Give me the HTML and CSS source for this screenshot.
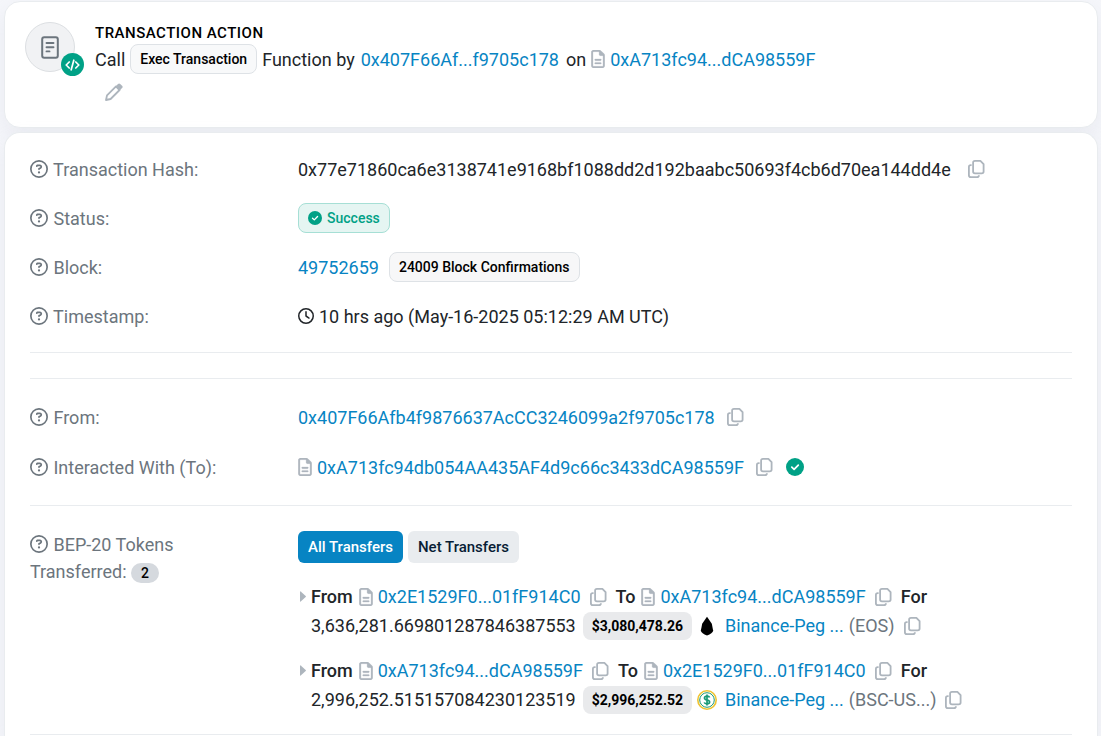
FILE: index.html
```html
<!DOCTYPE html>
<html lang="en">
<head>
<meta charset="utf-8">
<meta name="viewport" content="width=device-width, initial-scale=1">
<title>Transaction Details</title>
<link rel="stylesheet" href="styles.css">
</head>
<body>
<svg class="sprite" aria-hidden="true">
  <symbol id="help" viewBox="0 0 512 512"><path d="M464 256A208 208 0 1 0 48 256a208 208 0 1 0 416 0zM0 256a256 256 0 1 1 512 0A256 256 0 1 1 0 256zm169.800-90.700c7.900-22.300 29.100-37.300 52.800-37.300h58.300c34.900 0 63.100 28.300 63.100 63.100c0 22.600-12.100 43.500-31.700 54.800L280 264.400c-.2 13-10.900 23.600-24 23.600c-13.300 0-24-10.700-24-24V250.500c0-8.600 4.600-16.500 12.100-20.800l44.300-25.400c4.700-2.700 7.600-7.700 7.600-13.100c0-8.400-6.800-15.100-15.100-15.100H222.600c-3.400 0-6.400 2.100-7.500 5.300l-.4 1.200c-4.400 12.500-18.200 19-30.600 14.600s-19-18.200-14.600-30.600l.4-1.200zM224 352a32 32 0 1 1 64 0 32 32 0 1 1 -64 0z"/></symbol>
  <symbol id="file" viewBox="0 0 384 512"><path d="M64 464c-8.800 0-16-7.200-16-16V64c0-8.800 7.200-16 16-16H224v80c0 17.700 14.300 32 32 32h80V448c0 8.800-7.200 16-16 16H64zM64 0C28.700 0 0 28.700 0 64V448c0 35.300 28.700 64 64 64H320c35.300 0 64-28.700 64-64V154.500c0-17-6.700-33.300-18.700-45.300L274.700 18.700C262.700 6.700 246.500 0 229.500 0H64zm56 256c-13.300 0-24 10.700-24 24s10.700 24 24 24H264c13.300 0 24-10.700 24-24s-10.700-24-24-24H120zm0 96c-13.300 0-24 10.700-24 24s10.700 24 24 24H264c13.300 0 24-10.700 24-24s-10.700-24-24-24H120z" stroke="currentColor" stroke-width="8"/></symbol>
  <symbol id="clock" viewBox="0 0 512 512"><path d="M464 256A208 208 0 1 1 48 256a208 208 0 1 1 416 0zM0 256a256 256 0 1 0 512 0A256 256 0 1 0 0 256zM232 120V256c0 8 4 15.500 10.700 20l96 64c11 7.400 25.900 4.400 33.300-6.700s4.400-25.900-6.700-33.300L280 243.200V120c0-13.300-10.700-24-24-24s-24 10.700-24 24z"/></symbol>
  <symbol id="check" viewBox="0 0 18 18"><circle cx="9" cy="9" r="9"/><path d="M5.800 9.200l2.300 2.200 4.200-4.300" fill="none" stroke="#fff" stroke-width="1.700" stroke-linecap="round" stroke-linejoin="round"/></symbol>
  <symbol id="copy" viewBox="0 0 17 18"><path d="M7 .9H12.400L15.600 4.100V11.500Q15.600 13.400 13.700 13.400H7Q5.100 13.400 5.100 11.500V2.800Q5.100.9 7 .9zM3.600 5.100H2.800Q.9 5.100.9 7V15.200Q.9 17.100 2.800 17.100H9Q10.900 17.100 10.900 15.200" fill="none" stroke="currentColor" stroke-width="1.800" stroke-linejoin="round"/></symbol>
  <symbol id="caret" viewBox="0 0 6 11"><path d="M0 .8v9.400q0 .8.700.3l5-4.500q.500-.5 0-1L.7.5Q0 0 0 .8z"/></symbol>
</svg>

<section class="card action">
  <div class="avatar">
    <svg class="receipt" viewBox="0 0 18 23" aria-hidden="true"><rect x="1.200" y="1.200" width="15.600" height="20.600" rx="2" fill="none" stroke="currentColor" stroke-width="2"/><path d="M5.500 7h7M5.500 11.200h7M5.500 15.400h3" stroke="currentColor" stroke-width="1.900" stroke-linecap="round"/></svg>
    <span class="code-badge"><svg viewBox="0 0 15 12" aria-hidden="true"><path d="M4.200 3L1.200 6l3 3M10.800 3l3 3-3 3M8.800 1.200L6.200 10.800" fill="none" stroke="currentColor" stroke-width="1.700" stroke-linecap="round" stroke-linejoin="round"/></svg></span>
  </div>
  <div class="action-body">
    <h1>TRANSACTION ACTION</h1>
    <div class="line">
      <span>Call</span><span class="pill">Exec Transaction</span><span>Function by</span>
      <a class="sender" href="#from">0x407F66Af...f9705c178</a><span>on</span>
      <svg class="file"><use href="#file"/></svg><a href="#to">0xA713fc94...dCA98559F</a>
    </div>
    <button class="edit" type="button" aria-label="Edit note"><svg viewBox="0 0 18 18"><path d="M1 17l1-4.600L11 3.400 14.600 7 5.600 16z" fill="none" stroke="currentColor" stroke-width="1.800" stroke-linejoin="round"/><path d="M10.300 3.700l2.700-2.800q1.100-1 2.200 0l1.900 1.900q1 1.100 0 2.200L14.300 7.700z" fill="currentColor"/></svg></button>
  </div>
</section>

<main class="card details">
  <dl>
    <div class="row">
      <dt><svg class="help"><use href="#help"/></svg> Transaction Hash:</dt>
      <dd><span>0x77e71860ca6e3138741e9168bf1088dd2d192baabc50693f4cb6d70ea144dd4e</span><button class="copy wide" type="button" aria-label="Copy hash"><svg><use href="#copy"/></svg></button></dd>
    </div>
    <div class="row">
      <dt><svg class="help"><use href="#help"/></svg> Status:</dt>
      <dd><span class="pill success"><svg><use href="#check"/></svg>Success</span></dd>
    </div>
    <div class="row">
      <dt><svg class="help"><use href="#help"/></svg> Block:</dt>
      <dd class="spaced"><a href="#block">49752659</a><span class="pill neutral">24009 Block Confirmations</span></dd>
    </div>
    <div class="row">
      <dt><svg class="help"><use href="#help"/></svg> Timestamp:</dt>
      <dd><svg class="clock"><use href="#clock"/></svg><span>10 hrs ago (May-16-2025 05:12:29 AM UTC)</span></dd>
    </div>
  </dl>
  <hr>
  <hr>
  <dl class="parties">
    <div class="row" id="from">
      <dt><svg class="help"><use href="#help"/></svg> From:</dt>
      <dd><a href="#from">0x407F66Afb4f9876637AcCC3246099a2f9705c178</a><button class="copy" type="button" aria-label="Copy sender"><svg><use href="#copy"/></svg></button></dd>
    </div>
    <div class="row" id="to">
      <dt><svg class="help"><use href="#help"/></svg> Interacted With (To):</dt>
      <dd><svg class="file"><use href="#file"/></svg><a href="#to">0xA713fc94db054AA435AF4d9c66c3433dCA98559F</a><button class="copy" type="button" aria-label="Copy recipient"><svg><use href="#copy"/></svg></button><svg class="verified"><use href="#check"/></svg></dd>
    </div>
  </dl>
  <hr>
  <dl class="tokens">
    <div class="row top">
      <dt><svg class="help"><use href="#help"/></svg> BEP-20 Tokens<br>Transferred: <span class="count">2</span></dt>
      <dd>
        <div class="tabs"><button class="active" type="button">All Transfers</button><button type="button">Net Transfers</button></div>
        <ul>
          <li>
            <div class="line"><svg class="caret"><use href="#caret"/></svg><b>From</b><svg class="file"><use href="#file"/></svg><a href="#a">0x2E1529F0...01fF914C0</a><button class="copy" type="button" aria-label="Copy address"><svg><use href="#copy"/></svg></button><b>To</b><svg class="file"><use href="#file"/></svg><a href="#b">0xA713fc94...dCA98559F</a><button class="copy" type="button" aria-label="Copy address"><svg><use href="#copy"/></svg></button><b>For</b></div>
            <div class="line amount"><span>3,636,281.669801287846387553</span><span class="price">$3,080,478.26</span><svg class="coin" viewBox="0 0 20 20"><path d="M10 .8L5.200 7.800 3.800 14.800Q4.500 17.500 10 19.500 15.500 17.500 16.200 14.800L14.800 7.800z"/></svg><a href="#eos">Binance-Peg ...</a><span class="symbol">(EOS)</span><button class="copy" type="button" aria-label="Copy token"><svg><use href="#copy"/></svg></button></div>
          </li>
          <li>
            <div class="line"><svg class="caret"><use href="#caret"/></svg><b>From</b><svg class="file"><use href="#file"/></svg><a href="#b">0xA713fc94...dCA98559F</a><button class="copy" type="button" aria-label="Copy address"><svg><use href="#copy"/></svg></button><b>To</b><svg class="file"><use href="#file"/></svg><a href="#a">0x2E1529F0...01fF914C0</a><button class="copy" type="button" aria-label="Copy address"><svg><use href="#copy"/></svg></button><b>For</b></div>
            <div class="line amount"><span>2,996,252.515157084230123519</span><span class="price">$2,996,252.52</span><svg class="coin" viewBox="0 0 20 20"><circle cx="10" cy="10" r="9.200" fill="#fff" stroke="#efc330" stroke-width="1.600"/><circle cx="10" cy="10" r="7.300" fill="none" stroke="#1a9a76" stroke-width="1"/><path d="M12.600 7.600Q12.200 6.200 10 6.200 7.500 6.200 7.500 8 7.500 9.600 10 10 12.600 10.400 12.600 12.100 12.600 13.900 10 13.900 7.700 13.900 7.300 12.400M10 4.500V15.600" fill="none" stroke="#1a9a76" stroke-width="1.700"/></svg><a href="#bsc">Binance-Peg ...</a><span class="symbol">(BSC-US...)</span><button class="copy" type="button" aria-label="Copy token"><svg><use href="#copy"/></svg></button></div>
          </li>
        </ul>
      </dd>
    </div>
  </dl>
  <hr>
</main>
</body>
</html>
```
FILE: styles.css
```css
* { box-sizing: border-box; }
body {
  margin: 0;
  min-height: 100vh;
  padding: 1px 3px 0 4px;
  display: flex;
  flex-direction: column;
  gap: 4px;
  background: #f5f6fa;
  color: #212529;
  font: 18px/27px Roboto, sans-serif;
}
.sprite { display: none; }
svg { flex: none; fill: currentColor; }
a { color: #0784c3; text-decoration: none; }
b { font-weight: 500; margin-right: 1px; }
button { font: inherit; border: 0; padding: 0; background: none; cursor: pointer; }
h1, dl, dd, ul { margin: 0; padding: 0; }
li { list-style: none; }

.card {
  background: #fff;
  border: 1px solid #e9ecef;
  border-radius: 16px;
  box-shadow: 0 8px 19px rgba(189, 197, 209, 0.2);
}
.action { display: flex; gap: 20px; padding: 20px; min-height: 127px; }
.avatar {
  position: relative;
  flex: none;
  width: 50px;
  height: 50px;
  display: grid;
  place-items: center;
  border: 1px solid #dcdfe2;
  border-radius: 50%;
  background: #f1f2f4;
  color: #6c757d;
}
.receipt { width: 18px; height: 23px; }
.code-badge {
  position: absolute;
  right: -10px;
  bottom: -5px;
  width: 23px;
  height: 23px;
  display: grid;
  place-items: center;
  border-radius: 50%;
  background: #00a186;
  color: #fff;
}
.code-badge svg { width: 15px; height: 12px; }
h1 { font-size: 15px; line-height: 22px; font-weight: 500; color: #000; letter-spacing: 0.5px; }
.line { display: flex; align-items: center; gap: 5px; white-space: nowrap; }
.sender { margin: 0 2px 0 1px; }
.edit { display: block; margin: 9px 10px 0; color: #adb5bd; }
.edit svg { display: block; width: 18px; height: 18px; }

.pill {
  padding: 3px 9px;
  border: 1px solid #dee2e6;
  border-radius: 8px;
  background: #f8f9fa;
  color: #000;
  font-size: 14px;
  line-height: 22px;
  font-weight: 500;
}
.neutral { background: #f7f7f8; }
.success {
  display: flex;
  align-items: center;
  gap: 5px;
  border-color: #a6dfd5;
  background: #e5f5f2;
  color: #00a186;
}
.success svg { width: 14px; height: 14px; }

.details { flex: 1; padding: 20px 25px 0; border-bottom: 0; border-radius: 16px 16px 0 0; }
.row { display: grid; grid-template-columns: 244px 1fr; gap: 24px; align-items: center; min-height: 32px; }
.row + .row { margin-top: 17px; }
.row.top { align-items: start; }
dt { color: #6c757d; }
.help { width: 18px; height: 18px; margin-right: 1px; vertical-align: -2px; }
.row:not(.top) dd { display: flex; align-items: center; gap: 5px; }
.row:not(.top) .spaced { gap: 10px; }
.clock { width: 16px; height: 16px; }
.file { width: 14px; height: 18px; color: #adb5bd; }
.copy { margin: 0 4px; color: #adb5bd; }
.copy.wide { margin-left: 12px; }
.copy svg { display: block; width: 17px; height: 18px; }
.parties .copy { margin-left: 7px; }
.verified { width: 18px; height: 18px; margin-left: 4px; color: #00a186; }
hr { width: 100%; margin: 0; border: 0; border-top: 1px solid #e9ecef; }
dl + hr { margin-top: 20px; }
hr + hr { margin-top: 25px; }
hr + dl { margin-top: 22px; }
.parties .row + .row { margin-top: 18px; }
.parties + hr { margin-top: 22px; }
hr + .tokens { margin-top: 25px; }

.count {
  display: inline-block;
  padding: 0 10px;
  border-radius: 10px;
  background: #d5d9de;
  color: #000;
  font-size: 14px;
  line-height: 20px;
  font-weight: 500;
}
.tabs { display: flex; gap: 5px; margin-bottom: 19px; }
.tabs button {
  padding: 5px 10px;
  border-radius: 6px;
  background: #e9ecef;
  color: #081d35;
  font-size: 15px;
  line-height: 22px;
  font-weight: 500;
}
.tabs .active { background: #0784c3; color: #fff; }
li + li { margin-top: 16px; }
li .line { height: 29px; }
.caret { width: 6px; height: 11px; margin-left: 2px; color: #adb5bd; }
.amount { padding-left: 13px; }
.price {
  margin-left: 2px;
  padding: 3px 9px;
  border-radius: 8px;
  background: #e9eaec;
  color: #000;
  font-size: 14px;
  line-height: 22px;
  font-weight: 700;
}
.coin { width: 20px; height: 20px; margin-right: 3px; color: #000; }
.symbol { color: #6c757d; }
```
